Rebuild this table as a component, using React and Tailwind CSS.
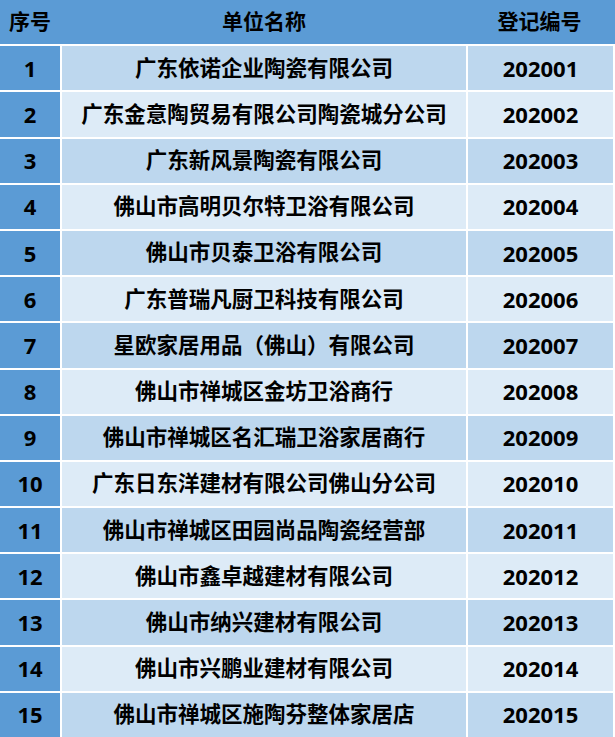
const rows = [
  ['1', '广东依诺企业陶瓷有限公司', '202001'],
  ['2', '广东金意陶贸易有限公司陶瓷城分公司', '202002'],
  ['3', '广东新风景陶瓷有限公司', '202003'],
  ['4', '佛山市高明贝尔特卫浴有限公司', '202004'],
  ['5', '佛山市贝泰卫浴有限公司', '202005'],
  ['6', '广东普瑞凡厨卫科技有限公司', '202006'],
  ['7', '星欧家居用品（佛山）有限公司', '202007'],
  ['8', '佛山市禅城区金坊卫浴商行', '202008'],
  ['9', '佛山市禅城区名汇瑞卫浴家居商行', '202009'],
  ['10', '广东日东洋建材有限公司佛山分公司', '202010'],
  ['11', '佛山市禅城区田园尚品陶瓷经营部', '202011'],
  ['12', '佛山市鑫卓越建材有限公司', '202012'],
  ['13', '佛山市纳兴建材有限公司', '202013'],
  ['14', '佛山市兴鹏业建材有限公司', '202014'],
  ['15', '佛山市禅城区施陶芬整体家居店', '202015'],
];

const App = () => {
  return (
    <div
      className="w-[615px] h-[737px] bg-white pr-[2px] overflow-hidden text-black font-bold"
      style={{ fontFamily: '"Open Sans", "Noto Sans CJK SC", sans-serif' }}
    >
      <div className="grid h-full grid-cols-[60px_404px_145px] grid-rows-[repeat(16,minmax(0,1fr))] gap-x-[2px] gap-y-[2px]">
        {/* Header */}
        <div className="col-span-3 grid grid-cols-[60px_404px_145px] gap-x-[2px] bg-[#5b9bd5] -mr-[2px] text-[21px]">
          <div className="flex items-center justify-center">序号</div>
          <div className="flex items-center justify-center">单位名称</div>
          <div className="flex items-center justify-center pr-[2px]">登记编号</div>
        </div>

        {rows.map(([no, name, code], i) => {
          const bg = i % 2 === 0 ? 'bg-[#bdd7ee]' : 'bg-[#ddebf7]';
          return [
            <div key={`n${i}`} className="bg-[#5b9bd5] flex items-center justify-center text-[22px]">{no}</div>,
            <div key={`m${i}`} className={`${bg} flex items-center justify-center text-[21.5px] pb-[1px]`}>{name}</div>,
            <div key={`c${i}`} className={`${bg} flex items-center justify-center text-[22px]`}>{code}</div>,
          ];
        })}
      </div>
    </div>
  );
};

export default App;
